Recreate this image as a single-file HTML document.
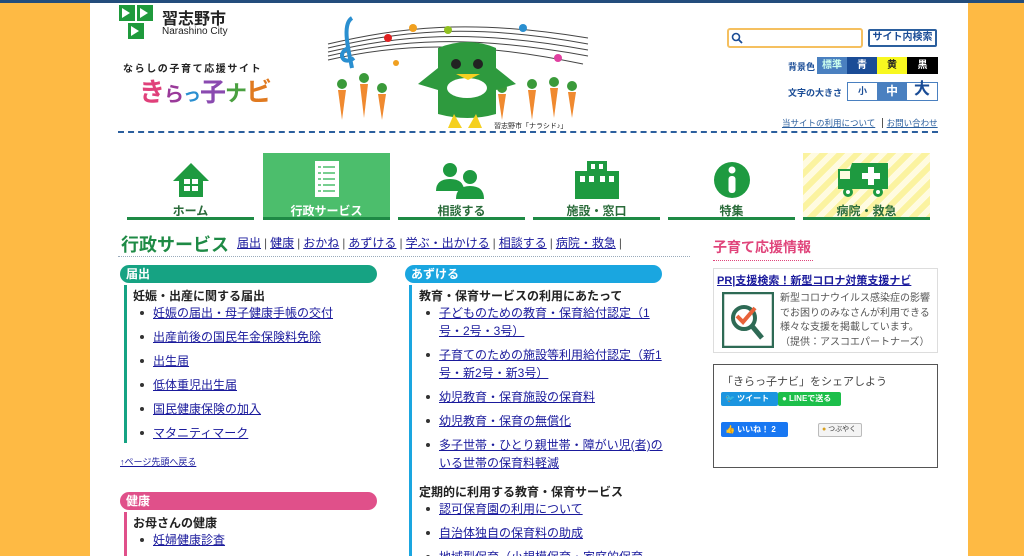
<!DOCTYPE html>
<html style="height:556px;overflow:hidden"><head><meta charset="utf-8"><style>
*{margin:0;padding:0;box-sizing:border-box}
body{width:1024px;height:556px;overflow:hidden;background:#feba44;font-family:"Liberation Sans","Noto Sans CJK JP",sans-serif;position:relative;color:#333}
.topbar{position:absolute;left:0;top:0;width:1024px;height:3px;background:#234d7c}
.page{position:absolute;left:90px;top:3px;width:878px;height:553px;background:#fff}
.a{position:absolute}
a{color:#1a1a9c;text-decoration:underline}
.nav{position:absolute;top:153px;width:127px;height:67px;text-align:center}
.nav .u{position:absolute;left:0;right:0;bottom:0;height:3px;background:#1e8a45}
.nav .t{position:absolute;left:0;right:0;top:52px;font-size:12px;line-height:13px;font-weight:bold;color:#2a6b3a}
.nav svg{position:absolute;left:44px;top:8px}
.sec{position:absolute;height:18px;border-radius:9px;color:#fff;font-size:12px;font-weight:bold;padding:2px 6px;line-height:14px}
ul{list-style:none}
li{position:relative;font-size:12px;line-height:18px;padding-left:20px;margin-bottom:6px}
li:before{content:"";position:absolute;left:7px;top:7px;width:4px;height:4px;border-radius:2px;background:#333}
li a{color:#1a1a9c}
.h4{font-size:12px;line-height:16px;font-weight:bold;color:#222;margin-bottom:0}
.hl a{margin:0 1px}
.hl span{margin:0 2px}
</style></head><body>
<div class="topbar"></div>
<div class="page"></div>

<svg class="a" style="left:119px;top:5px" width="36" height="34" viewBox="0 0 36 34">
<rect x="0" y="0" width="16" height="16" fill="#1f9a3c"/><rect x="18" y="0" width="16" height="16" fill="#1f9a3c"/><rect x="9" y="18" width="16" height="16" fill="#1f9a3c"/>
<path d="M3 3l8 5-8 5zM21 3l8 5-8 5zM12 21l8 5-8 5z" fill="#fff"/></svg>
<div class="a" style="left:162px;top:5px;font-size:16px;font-weight:bold;color:#222">習志野市</div>
<div class="a" style="left:162px;top:26px;font-size:10px;color:#222">Narashino City</div>
<div class="a" style="left:123px;top:60px;font-size:10px;font-weight:bold;letter-spacing:1.6px;color:#222">ならしの子育て応援サイト</div>
<div class="a" style="left:139px;top:76px;font-size:26px;font-weight:bold;letter-spacing:-1px;line-height:32px"><span style="color:#e0407a">き</span><span style="color:#9a3a9a;font-size:20px">ら</span><span style="color:#2a8fd0;font-size:18px">っ</span><span style="color:#8a4ab0">子</span><span style="color:#4aa040;font-size:22px">ナ</span><span style="color:#e07a20">ビ</span></div>

<svg class="a" style="left:318px;top:8px" width="275" height="124" viewBox="0 0 275 124">
<g fill="none" stroke="#444" stroke-width="1">
<path d="M10 36C80 20 150 10 270 30"/><path d="M10 40C80 24 150 14 270 36"/><path d="M10 44C80 28 150 20 270 42"/><path d="M10 48C80 32 150 26 270 48"/><path d="M10 52C80 36 150 32 265 56"/></g>
<path d="M34 10c-10 6-4 30 0 50M30 40c-12 6-4 18 6 10" stroke="#2a8fd0" stroke-width="4" fill="none"/>
<circle cx="70" cy="30" r="4" fill="#e02020"/><circle cx="95" cy="20" r="4" fill="#f0a020"/><circle cx="130" cy="22" r="4" fill="#90c020"/><circle cx="205" cy="20" r="4" fill="#2a8fd0"/><circle cx="240" cy="50" r="4" fill="#e040a0"/><circle cx="78" cy="55" r="3" fill="#f0a020"/>
<g fill="#f08a30"><path d="M20 82l4 30 4-30z"/><path d="M42 76l4 34 4-34z"/><path d="M60 86l4 26 4-26z"/><path d="M210 82l4 30 4-30z"/><path d="M232 80l4 30 4-30z"/><path d="M250 84l4 26 4-26z"/><path d="M180 86l4 26 4-26z"/></g>
<g fill="#3a9a3a"><circle cx="24" cy="76" r="5"/><circle cx="46" cy="70" r="5"/><circle cx="64" cy="80" r="5"/><circle cx="214" cy="76" r="5"/><circle cx="236" cy="74" r="5"/><circle cx="254" cy="78" r="5"/><circle cx="184" cy="80" r="5"/></g>
<path d="M120 40q30-12 58 0v66q-28 8-58 0z" fill="#2e9a3e"/>
<path d="M120 60l-20 16 20 6zM178 60l20 16-20 6z" fill="#2e9a3e"/>
<ellipse cx="149" cy="80" rx="20" ry="10" fill="#fff"/>
<circle cx="138" cy="56" r="5" fill="#222"/><circle cx="160" cy="56" r="5" fill="#222"/>
<path d="M138 66h24l-12 6z" fill="#f5d020"/>
<path d="M136 106l-6 14h14zM158 106l6 14h-14z" fill="#f5d020"/>
<text x="176" y="120" font-size="7" fill="#222" font-family="Liberation Sans,Noto Sans CJK JP,sans-serif">習志野市「ナラシド♪」</text>
</svg>

<div class="a" style="left:727px;top:28px;width:136px;height:20px;border:2px solid #f5c060;border-radius:3px"></div>
<svg class="a" style="left:731px;top:32px" width="12" height="12" viewBox="0 0 12 12"><circle cx="5" cy="5" r="3.5" stroke="#1a4c96" stroke-width="1.6" fill="none"/><path d="M7.5 7.5l3.5 3.5" stroke="#1a4c96" stroke-width="1.8"/></svg>
<div class="a" style="left:868px;top:29px;width:69px;height:18px;border:2px solid #2b5f9e;border-radius:2px;font-size:10px;font-weight:bold;color:#1a4c96;text-align:center;line-height:14px">サイト内検索</div>
<div class="a" style="left:788px;top:60px;font-size:9px;font-weight:bold;color:#1a4c96">背景色</div>
<div class="a" style="left:817px;top:57px;width:30px;height:17px;background:#4a80c0;color:#cfe;font-size:10px;font-weight:bold;text-align:center;line-height:17px">標準</div>
<div class="a" style="left:847px;top:57px;width:30px;height:17px;background:#1a4c96;color:#fff;font-size:10px;font-weight:bold;text-align:center;line-height:17px">青</div>
<div class="a" style="left:877px;top:57px;width:30px;height:17px;background:#f8f820;color:#222;font-size:10px;font-weight:bold;text-align:center;line-height:17px">黄</div>
<div class="a" style="left:907px;top:57px;width:31px;height:17px;background:#000;color:#fff;font-size:10px;font-weight:bold;text-align:center;line-height:17px">黒</div>
<div class="a" style="left:788px;top:86px;font-size:9px;font-weight:bold;color:#1a4c96">文字の大きさ</div>
<div class="a" style="left:847px;top:82px;width:91px;height:19px;border:1px solid #4a80c0"></div>
<div class="a" style="left:848px;top:83px;width:29px;height:17px;color:#1a4c96;font-size:9px;font-weight:bold;text-align:center;line-height:17px">小</div>
<div class="a" style="left:877px;top:83px;width:30px;height:17px;background:#4a80c0;color:#fff;font-size:12px;font-weight:bold;text-align:center;line-height:17px">中</div>
<div class="a" style="left:907px;top:80px;width:30px;height:20px;color:#1a4c96;font-size:16px;font-weight:bold;text-align:center;line-height:20px">大</div>
<div class="a" style="left:782px;top:117px;font-size:8.5px;color:#2b5f9e"><span style="text-decoration:underline">当サイトの利用について</span> <span style="border-left:1px solid #555;margin:0 4px;padding-left:4px;text-decoration:underline">お問い合わせ</span></div>
<div class="a" style="left:118px;top:131px;width:820px;border-top:2px dashed #2b5f9e"></div>

<div class="nav" style="left:127px"><svg width="40" height="38" viewBox="0 0 40 38"><path d="M20 2L2 20h6v16h24V20h6z" fill="#1e9a40"/><rect x="13" y="18" width="14" height="12" fill="#fff"/><path d="M20 18v12M13 24h14" stroke="#1e9a40" stroke-width="2"/></svg><div class="t">ホーム</div><div class="u"></div></div>
<div class="nav" style="left:263px;background:#4cbe6c"><svg width="40" height="40" viewBox="0 0 40 40"><rect x="8" y="0" width="24" height="36" fill="#fff"/><g stroke="#4cbe6c" stroke-width="1.5"><path d="M11 6h3M16 6h12M11 12h3M16 12h12M11 18h3M16 18h12M11 24h3M16 24h12M11 30h3M16 30h12"/></g></svg><div class="t" style="color:#fff">行政サービス</div><div class="u"></div></div>
<div class="nav" style="left:398px"><svg width="48" height="38" viewBox="0 0 48 38" style="left:38px"><circle cx="14" cy="9" r="7" fill="#1e9a40"/><path d="M0 30q0-12 14-12t14 12z" fill="#1e9a40"/><circle cx="34" cy="16" r="7" fill="#1e9a40"/><path d="M20 38q0-13 14-13t14 13z" fill="#1e9a40"/></svg><div class="t">相談する</div><div class="u"></div></div>
<div class="nav" style="left:533px"><svg width="44" height="38" viewBox="0 0 44 38" style="left:42px"><rect x="12" y="0" width="20" height="12" fill="#1e9a40"/><rect x="0" y="10" width="44" height="28" fill="#1e9a40"/><g fill="#fff"><rect x="16" y="3" width="4" height="5"/><rect x="24" y="3" width="4" height="5"/><rect x="5" y="15" width="5" height="6"/><rect x="14" y="15" width="5" height="6"/><rect x="25" y="15" width="5" height="6"/><rect x="34" y="15" width="5" height="6"/></g></svg><div class="t">施設・窓口</div><div class="u"></div></div>
<div class="nav" style="left:668px"><svg width="38" height="38" viewBox="0 0 38 38" style="left:45px"><circle cx="19" cy="19" r="18" fill="#1e9a40"/><circle cx="19" cy="9" r="3.5" fill="#fff"/><rect x="15.5" y="15" width="7" height="17" rx="3" fill="#fff"/></svg><div class="t">特集</div><div class="u"></div></div>
<div class="nav" style="left:803px;background:repeating-linear-gradient(135deg,#fbf3a0 0 6px,#fffbe0 6px 12px)"><svg width="52" height="38" viewBox="0 0 52 38" style="left:35px"><path d="M0 8h12l2-6h36v26H0z" fill="#1e9a40"/><rect x="2" y="10" width="10" height="8" fill="#fffbe0"/><circle cx="10" cy="31" r="5" fill="#1e9a40"/><circle cx="10" cy="31" r="2" fill="#fff"/><circle cx="40" cy="31" r="5" fill="#1e9a40"/><circle cx="40" cy="31" r="2" fill="#fff"/><path d="M30 6h6v6h6v6h-6v6h-6v-6h-6v-6h6z" fill="#fff"/></svg><div class="t">病院・救急</div><div class="u"></div></div>

<div class="a" style="left:121px;top:231px;font-size:18px;font-weight:bold;color:#1e8a45">行政サービス</div>
<div class="a hl" style="left:236px;top:234px;font-size:12px;color:#555;white-space:nowrap"><a href="#">届出</a><span>|</span><a href="#">健康</a><span>|</span><a href="#">おかね</a><span>|</span><a href="#">あずける</a><span>|</span><a href="#">学ぶ・出かける</a><span>|</span><a href="#">相談する</a><span>|</span><a href="#">病院・救急</a><span>|</span></div>
<div class="a" style="left:118px;top:256px;width:572px;border-top:1px dotted #9ab"></div>

<div class="sec" style="left:120px;top:265px;width:257px;background:#16a383">届出</div>
<div class="a" style="left:124px;top:285px;width:3px;height:158px;background:#16a383"></div>
<div class="a" style="left:133px;top:288px;width:240px"><div class="h4">妊娠・出産に関する届出</div>
<ul><li><a href="#">妊娠の届出・母子健康手帳の交付</a></li><li><a href="#">出産前後の国民年金保険料免除</a></li><li><a href="#">出生届</a></li><li><a href="#">低体重児出生届</a></li><li><a href="#">国民健康保険の加入</a></li><li><a href="#">マタニティマーク</a></li></ul></div>
<div class="a" style="left:120px;top:455px;font-size:9px"><a href="#">↑ページ先頭へ戻る</a></div>
<div class="sec" style="left:120px;top:492px;width:257px;background:#e0508a">健康</div>
<div class="a" style="left:124px;top:512px;width:3px;height:44px;background:#e0508a"></div>
<div class="a" style="left:133px;top:515px;width:240px"><div class="h4">お母さんの健康</div><ul><li><a href="#">妊婦健康診査</a></li></ul></div>

<div class="sec" style="left:405px;top:265px;width:257px;background:#1aa6e0">あずける</div>
<div class="a" style="left:409px;top:285px;width:3px;height:271px;background:#1aa6e0"></div>
<div class="a" style="left:419px;top:288px;width:245px;height:268px;overflow:hidden"><div class="h4">教育・保育サービスの利用にあたって</div>
<ul><li><a href="#">子どものための教育・保育給付認定（1号・2号・3号）</a></li><li><a href="#">子育てのための施設等利用給付認定（新1号・新2号・新3号）</a></li><li><a href="#">幼児教育・保育施設の保育料</a></li><li><a href="#">幼児教育・保育の無償化</a></li><li><a href="#">多子世帯・ひとり親世帯・障がい児(者)のいる世帯の保育料軽減</a></li></ul>
<div class="h4" style="margin-top:12px">定期的に利用する教育・保育サービス</div>
<ul><li><a href="#">認可保育園の利用について</a></li><li><a href="#">自治体独自の保育料の助成</a></li><li><a href="#">地域型保育（小規模保育・家庭的保育</a></li></ul></div>

<div class="a" style="left:713px;top:237px;font-size:14px;font-weight:bold;color:#e0457b">子育て応援情報</div>
<div class="a" style="left:713px;top:260px;width:100px;border-top:1px dotted #e0457b"></div>
<div class="a" style="left:713px;top:268px;width:225px;height:85px;border:1px solid #ddd"></div>
<div class="a" style="left:717px;top:272px;font-size:11px;font-weight:bold"><a href="#" style="color:#1a1a9c">PR|支援検索！新型コロナ対策支援ナビ</a></div>
<svg class="a" style="left:722px;top:292px" width="52" height="56" viewBox="0 0 52 56"><rect x="1" y="1" width="50" height="54" fill="none" stroke="#2e6a55" stroke-width="2.5"/><circle cx="22" cy="26" r="11" fill="none" stroke="#2e6a55" stroke-width="4"/><path d="M30 34l10 12" stroke="#2e6a55" stroke-width="5"/><path d="M15 24l6 6 12-14" stroke="#e8623a" stroke-width="4" fill="none"/></svg>
<div class="a" style="left:780px;top:292px;width:158px;font-size:10px;line-height:14.5px;color:#555">新型コロナウイルス感染症の影響でお困りのみなさんが利用できる様々な支援を掲載しています。<br>（提供：アスコエパートナーズ）</div>
<div class="a" style="left:713px;top:364px;width:225px;height:104px;border:1px solid #555"></div>
<div class="a" style="left:722px;top:373px;font-size:11px;color:#444">「きらっ子ナビ」をシェアしよう</div>
<div class="a" style="left:721px;top:392px;width:57px;height:14px;background:#1b95e0;border-radius:2px;color:#fff;font-size:8px;line-height:14px;padding-left:4px;font-weight:bold">🐦 ツイート</div>
<div class="a" style="left:778px;top:392px;width:63px;height:14px;background:#1cbf4a;border-radius:2px;color:#fff;font-size:8px;line-height:14px;padding-left:4px;font-weight:bold">● LINEで送る</div>
<div class="a" style="left:721px;top:422px;width:67px;height:15px;background:#1877f2;border-radius:2px;color:#fff;font-size:8px;line-height:15px;padding-left:4px;font-weight:bold">👍 いいね！ 2</div>
<div class="a" style="left:818px;top:423px;width:44px;height:14px;background:#f4f4f4;border:1px solid #bbb;border-radius:2px;color:#333;font-size:7px;line-height:12px;padding-left:3px"><span style="color:#d8a020">●</span> つぶやく</div>
</body></html>
